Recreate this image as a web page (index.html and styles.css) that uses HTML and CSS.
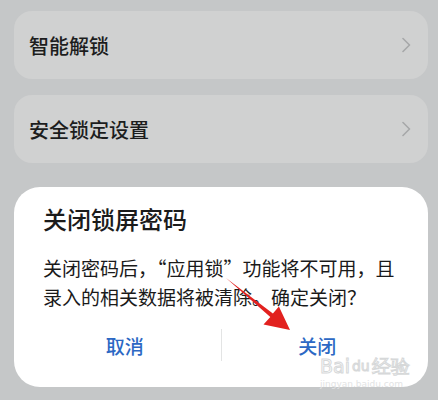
FILE: index.html
```html
<!DOCTYPE html>
<html lang="zh">
<head>
<meta charset="utf-8">
<link rel="stylesheet" href="styles.css">
</head>
<body>
<div class="page">
  <div class="card">
    <span class="card-label">智能解锁</span>
    <svg class="chev" width="9" height="16" viewBox="0 0 9 16"><path d="M1 1.5 L7.5 8 L1 14.5" fill="none" stroke="#a6a8a9" stroke-width="1.6" stroke-linecap="round" stroke-linejoin="round"/></svg>
  </div>
  <div class="card">
    <span class="card-label">安全锁定设置</span>
    <svg class="chev" width="9" height="16" viewBox="0 0 9 16"><path d="M1 1.5 L7.5 8 L1 14.5" fill="none" stroke="#a6a8a9" stroke-width="1.6" stroke-linecap="round" stroke-linejoin="round"/></svg>
  </div>
  <div class="dialog">
    <div class="dlg-title">关闭锁屏密码</div>
    <div class="dlg-body">关闭密码后，“应用锁”功能将不可用，且录入的相关数据将被清除。确定关闭？</div>
    <div class="dlg-actions">
      <div class="btn">取消</div>
      <div class="divider"></div>
      <div class="btn">关闭</div>
    </div>
  </div>
</div>
<div class="watermark">
  <div class="wm-main"><span>Bai</span><span class="wm-du">du</span><span>经验</span></div>
  <div class="wm-url">jingyan.baidu.com</div>
</div>
<svg class="arrow" width="438" height="400" viewBox="0 0 438 400">
  <polygon points="226,278 272.9,313.5 278.9,306.6 290,330 263.5,324.5 270.3,317" fill="#e2211f"/>
</svg>
</body>
</html>
```

FILE: styles.css
```css
html, body {
  margin: 0;
  padding: 0;
}
body {
  background: #c5c7c8;
  width: 438px;
  height: 400px;
  overflow: hidden;
  position: relative;
  font-family: "Noto Sans CJK SC", "Noto Sans", sans-serif;
}
.page {
  padding: 11px 10px 0 14px;
  display: flex;
  flex-direction: column;
}
.card {
  height: 68px;
  background: #d0d1d1;
  border-radius: 18px;
  display: flex;
  align-items: center;
  justify-content: space-between;
  padding: 0 17px 0 15px;
  margin-bottom: 16px;
}
.card-label {
  font-size: 20px;
  font-weight: 500;
  color: #1c1d1d;
}
.chev {
  display: block;
}
.dialog {
  margin-top: 8px;
  height: 200px;
  box-sizing: border-box;
  background: #ffffff;
  border-radius: 26px;
  padding: 16px 15px 18px 15px;
  display: flex;
  flex-direction: column;
}
.dlg-title {
  font-size: 24px;
  line-height: 32px;
  font-weight: 500;
  color: #1b1b1b;
  padding: 0 14px;
}
.dlg-body {
  margin-top: 18px;
  font-size: 19px;
  line-height: 29px;
  color: #1a1a1a;
  padding: 0 14px;
}
.dlg-actions {
  margin-top: auto;
  height: 48px;
  display: flex;
  align-items: center;
}
.btn {
  flex: 1;
  text-align: center;
  font-size: 19px;
  font-weight: 500;
  color: #2c68c4;
}
.divider {
  width: 1px;
  height: 32px;
  background: #e3e4e4;
}
.watermark {
  position: absolute;
  left: 320px;
  top: 356px;
  color: transparent;
}
.wm-main {
  font-family: "DejaVu Sans", sans-serif;
  font-size: 19px;
  line-height: 20px;
  -webkit-text-stroke: 1px #d6d8d9;
  display: flex;
  gap: 2px;
}
.wm-du {
  font-size: 14px;
}
.wm-url {
  font-family: "DejaVu Sans", sans-serif;
  font-size: 9px;
  line-height: 10px;
  color: #e2e3e4;
  margin-top: 3px;
}
.arrow {
  position: absolute;
  left: 0;
  top: 0;
  pointer-events: none;
}
```
